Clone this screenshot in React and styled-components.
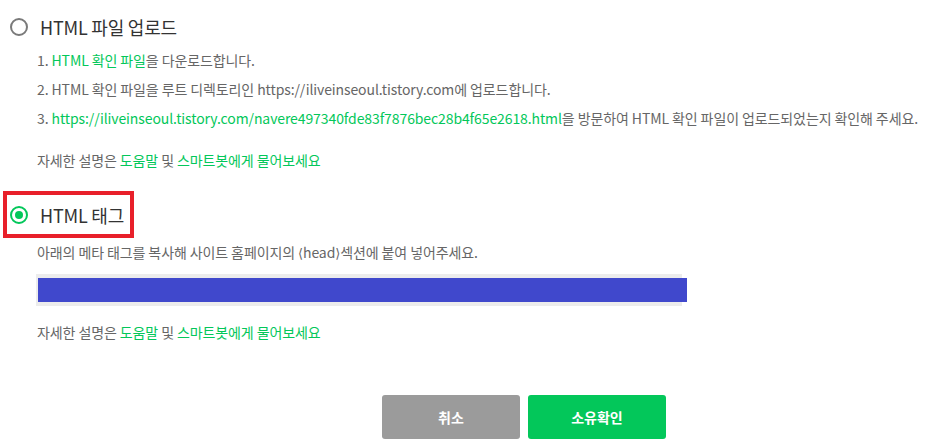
import styled, { createGlobalStyle } from 'styled-components';

const GlobalStyle = createGlobalStyle`
  html, body {
    margin: 0;
    padding: 0;
    background: #fff;
  }
  body {
    font-family: "Noto Sans CJK KR", "Noto Sans", sans-serif;
    color: #666;
  }
`;

const Page = styled.div`
  width: 936px;
  height: 444px;
  overflow: hidden;
  padding-top: 15px;
  box-sizing: border-box;
`;

const Option = styled.section`
  position: relative;
  margin-bottom: ${(p) => p.$gap || 0}px;
`;

const RadioRow = styled.label`
  display: flex;
  align-items: center;
  gap: 12px;
  height: 24px;
  padding-left: 10px;
  font-size: 18px;
  color: #333;
  letter-spacing: -0.2px;
`;

const Radio = styled.span`
  box-sizing: border-box;
  width: 18px;
  height: 18px;
  border-radius: 50%;
  border: 2px solid ${(p) => (p.$checked ? '#03c75a' : '#7a7a7a')};
  display: flex;
  align-items: center;
  justify-content: center;

  &::after {
    content: '';
    display: ${(p) => (p.$checked ? 'block' : 'none')};
    width: 8px;
    height: 8px;
    border-radius: 50%;
    background: #03c75a;
  }
`;

const Highlight = styled.div`
  position: absolute;
  left: 3px;
  top: -12px;
  width: 131px;
  height: 47px;
  border: 4px solid #e8202a;
  box-sizing: border-box;
  pointer-events: none;
`;

const Body = styled.div`
  padding-left: 37px;
  font-size: 14px;
  letter-spacing: -0.1px;
`;

const Steps = styled.ol`
  list-style: none;
  margin: 7px 0 0;
  padding: 0;
`;

const Step = styled.li`
  height: 29px;
  line-height: 29px;
  white-space: nowrap;
`;

const Link = styled.a`
  color: #03c75a;
  text-decoration: none;
`;

const Line = styled.p`
  margin: ${(p) => p.$top || 0}px 0 0;
  line-height: 20px;
  white-space: nowrap;
`;

const Bracket = styled.span`
  font-family: "DejaVu Sans", sans-serif;
  font-size: 13px;
`;

const CodeBox = styled.div`
  margin-top: 10px;
  width: 646px;
  height: 32px;
  margin-left: -1px;
  background: #ececec;
  padding: 4px 0 4px 2px;
  box-sizing: border-box;
`;

const CodeBar = styled.div`
  width: 649px;
  height: 24px;
  background: #4048cc;
`;

const Footer = styled.div`
  display: flex;
  gap: 8px;
  padding-left: 382px;
  margin-top: 53px;
`;

const Button = styled.button`
  width: 138px;
  height: 44px;
  border: 0;
  border-radius: 3px;
  background: ${(p) => (p.$primary ? '#03c75a' : '#9b9b9b')};
  color: #fff;
  font-family: inherit;
  font-size: 14px;
  font-weight: 700;
  cursor: pointer;
`;

const HelpLine = ({ top }) => (
  <Line $top={top}>
    자세한 설명은 <Link href="#">도움말</Link> 및 <Link href="#">스마트봇에게 물어보세요</Link>
  </Line>
);

export default function App() {
  return (
    <Page>
      <GlobalStyle />
      <Option $gap={33}>
        <RadioRow>
          <Radio />
          HTML 파일 업로드
        </RadioRow>
        <Body>
          <Steps>
            <Step>
              1. <Link href="#">HTML 확인 파일</Link>을 다운로드합니다.
            </Step>
            <Step>2. HTML 확인 파일을 루트 디렉토리인 https://iliveinseoul.tistory.com에 업로드합니다.</Step>
            <Step>
              3. <Link href="#">https://iliveinseoul.tistory.com/navere497340fde83f7876bec28b4f65e2618.html</Link>을 방문하여 HTML 확인 파일이 업로드되었는지 확인해 주세요.
            </Step>
          </Steps>
          <HelpLine top={17} />
        </Body>
      </Option>
      <Option>
        <Highlight />
        <RadioRow>
          <Radio $checked />
          HTML 태그
        </RadioRow>
        <Body>
          <Line $top={15}>
            아래의 메타 태그를 복사해 사이트 홈페이지의 <Bracket>⟨</Bracket>head<Bracket>⟩</Bracket>섹션에 붙여 넣어주세요.
          </Line>
          <CodeBox>
            <CodeBar />
          </CodeBox>
          <HelpLine top={16} />
        </Body>
      </Option>
      <Footer>
        <Button>취소</Button>
        <Button $primary>소유확인</Button>
      </Footer>
    </Page>
  );
}
